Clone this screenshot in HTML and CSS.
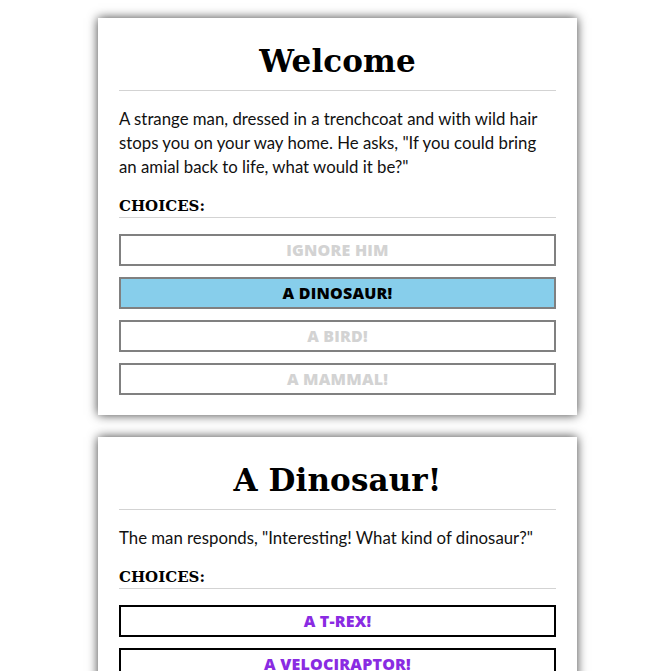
FILE: index.html
```html
<!DOCTYPE html>
<html>
<head>
<meta charset="utf-8">
<link rel="stylesheet" href="styles.css">
</head>
<body>
<div class="page">
  <section class="card">
    <h1 class="title">Welcome</h1>
    <p class="text">A strange man, dressed in a trenchcoat and with wild hair stops you on your way home. He asks, "If you could bring an amial back to life, what would it be?"</p>
    <h2 class="choices-head">CHOICES:</h2>
    <div class="choices">
      <div class="choice done">IGNORE HIM</div>
      <div class="choice picked">A DINOSAUR!</div>
      <div class="choice done">A BIRD!</div>
      <div class="choice done">A MAMMAL!</div>
    </div>
  </section>
  <section class="card">
    <h1 class="title">A Dinosaur!</h1>
    <p class="text">The man responds, "Interesting! What kind of dinosaur?"</p>
    <h2 class="choices-head">CHOICES:</h2>
    <div class="choices">
      <div class="choice open">A T-REX!</div>
      <div class="choice open">A VELOCIRAPTOR!</div>
    </div>
  </section>
</div>
</body>
</html>
```
FILE: styles.css
```css
html, body {
  margin: 0;
  padding: 0;
  background: #fff;
  overflow: hidden;
}
.page {
  display: flex;
  flex-direction: column;
  gap: 22px;
  padding: 18px 0 0 98px;
}
.card {
  width: 479px;
  box-sizing: border-box;
  background: #fff;
  box-shadow: 0 0 10px rgba(0,0,0,0.75);
  padding: 23px 21px 20px 21px;
}
.title {
  margin: 0;
  font-family: "DejaVu Serif", "Liberation Serif", serif;
  font-weight: bold;
  font-size: 31px;
  line-height: 40px;
  text-align: center;
  padding-bottom: 9px;
  border-bottom: 1px solid #d3d3d3;
  letter-spacing: 0.1px;
}
.text {
  margin: 16px 0 0 0;
  font-family: "Lato", sans-serif;
  font-size: 16.8px;
  line-height: 24px;
  color: #111;
}
.choices-head {
  margin: 17px 0 0 0;
  font-family: "DejaVu Serif", "Liberation Serif", serif;
  font-weight: bold;
  font-size: 15px;
  line-height: 20px;
  padding-bottom: 1px;
  border-bottom: 1px solid #d3d3d3;
}
.choices {
  display: flex;
  flex-direction: column;
  gap: 11px;
  margin-top: 16px;
}
.choice {
  height: 32px;
  box-sizing: border-box;
  border: 2px solid #808080;
  display: flex;
  align-items: center;
  justify-content: center;
  font-family: "Open Sans", sans-serif;
  font-weight: 800;
  font-size: 16px;
  letter-spacing: 0.2px;
}
.choice.done {
  color: #d3d3d3;
}
.choice.picked {
  background: #87ceeb;
  color: #000;
}
.choice.open {
  border-color: #000;
  color: #8a2be2;
}
```
